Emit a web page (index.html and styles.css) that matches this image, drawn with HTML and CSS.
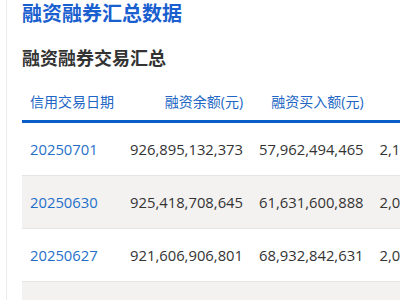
FILE: index.html
```html
<!DOCTYPE html>
<html lang="zh">
<head>
<meta charset="utf-8">
<link rel="stylesheet" href="styles.css">
</head>
<body>
<div class="page">
  <h1 class="title">融资融券汇总数据</h1>
  <h2 class="subtitle">融资融券交易汇总</h2>
  <table class="data">
    <thead>
      <tr>
        <th class="left">信用交易日期</th>
        <th>融资余额(元)</th>
        <th>融资买入额(元)</th>
        <th>融券余额</th>
      </tr>
    </thead>
    <tbody>
      <tr>
        <td class="date">20250701</td>
        <td>926,895,132,373</td>
        <td>57,962,494,465</td>
        <td>2,184,556,331</td>
      </tr>
      <tr class="alt">
        <td class="date">20250630</td>
        <td>925,418,708,645</td>
        <td>61,631,600,888</td>
        <td>2,065,312,774</td>
      </tr>
      <tr>
        <td class="date">20250627</td>
        <td>921,606,906,801</td>
        <td>68,932,842,631</td>
        <td>2,041,209,518</td>
      </tr>
      <tr class="alt">
        <td class="date">20250626</td>
        <td>920,377,412,509</td>
        <td>66,410,255,978</td>
        <td>2,038,774,120</td>
      </tr>
    </tbody>
  </table>
</div>
</body>
</html>
```

FILE: styles.css
```css
html, body {
  margin: 0;
  padding: 0;
  background: #fff;
  overflow: hidden;
}
body {
  font-family: "Open Sans", "Noto Sans CJK SC", sans-serif;
}
.page {
  margin-left: 6px;
  border-left: 1px solid #ebebeb;
  padding: 0 0 0 15px;
  min-height: 300px;
}
.title {
  margin: 0;
  padding-top: 1px;
  font-size: 20px;
  line-height: 26px;
  font-weight: 700;
  color: #1a5fcf;
}
.subtitle {
  margin: 19px 0 0;
  font-size: 18px;
  line-height: 24px;
  font-weight: 700;
  color: #333;
}
.data {
  margin-top: 21px;
  border-collapse: collapse;
  white-space: nowrap;
}
.data th {
  font-size: 14px;
  font-weight: 400;
  color: #2166c4;
  text-align: right;
  padding: 0 8px;
  height: 29px;
  vertical-align: top;
  border-bottom: 3px solid #0a5ec8;
}
.data th.left {
  text-align: left;
}
.data td {
  font-size: 14.8px;
  color: #333;
  text-align: right;
  padding: 0 8px;
  height: 52px;
  border-bottom: 1px solid #e5e5e5;
}
.data td.date {
  text-align: left;
  color: #1f6fc9;
}
.data tr.alt td {
  background: #f3f2f1;
}
```
